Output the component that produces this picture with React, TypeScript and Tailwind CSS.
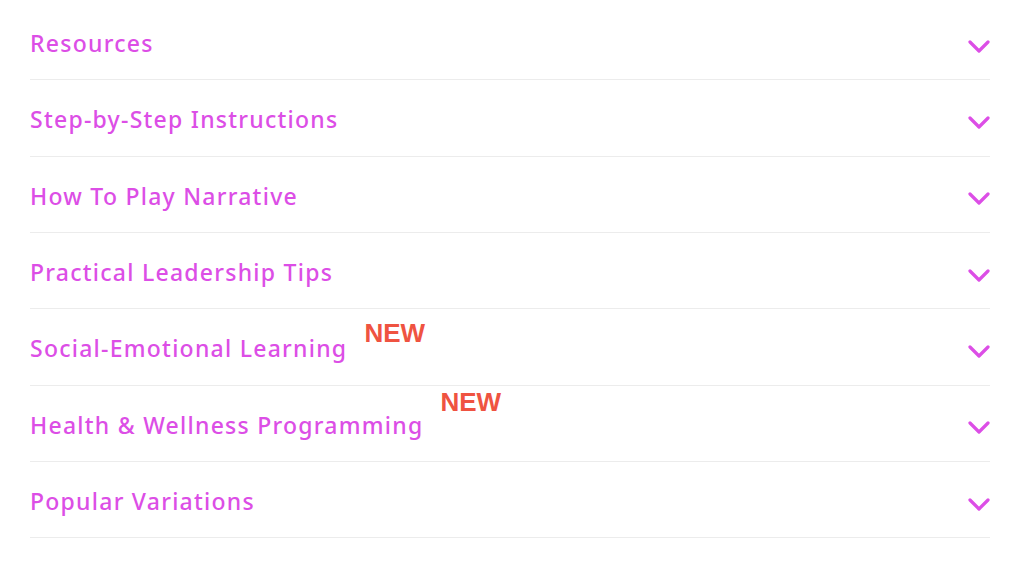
const items: { title: string; badge?: string }[] = [
  { title: 'Resources' },
  { title: 'Step-by-Step Instructions' },
  { title: 'How To Play Narrative' },
  { title: 'Practical Leadership Tips' },
  { title: 'Social-Emotional Learning', badge: 'top-[-15px]' },
  { title: 'Health & Wellness Programming', badge: 'top-[-23px]' },
  { title: 'Popular Variations' },
];

function Chevron() {
  return (
    <svg width="22" height="13" viewBox="0 0 22 13" fill="none" className="shrink-0 mt-[6px]">
      <path d="M2 2l9 9 9-9" stroke="#dc4ee6" strokeWidth="3.2" strokeLinecap="round" strokeLinejoin="round" />
    </svg>
  );
}

export default function App() {
  return (
    <div className="w-[1024px] h-[562px] bg-white pl-[30px] pr-[34px] pt-[4px]" style={{ fontFamily: '"Noto Sans", sans-serif' }}>
      {items.map((item) => (
        <div
          key={item.title}
          className="h-[76.33px] pt-[3px] flex items-center justify-between border-b border-[#ececec]"
        >
          <div className="flex items-center">
            <span className="text-[23px] font-medium text-[#dc4ee6] tracking-[1.25px]">{item.title}</span>
            {item.badge && (
              <span
                className={`relative ml-[17px] text-[26px] font-bold text-[#ef5341] leading-none ${item.badge}`}
                style={{ fontFamily: '"Liberation Sans", Arial, sans-serif' }}
              >
                NEW
              </span>
            )}
          </div>
          <Chevron />
        </div>
      ))}
    </div>
  );
}
